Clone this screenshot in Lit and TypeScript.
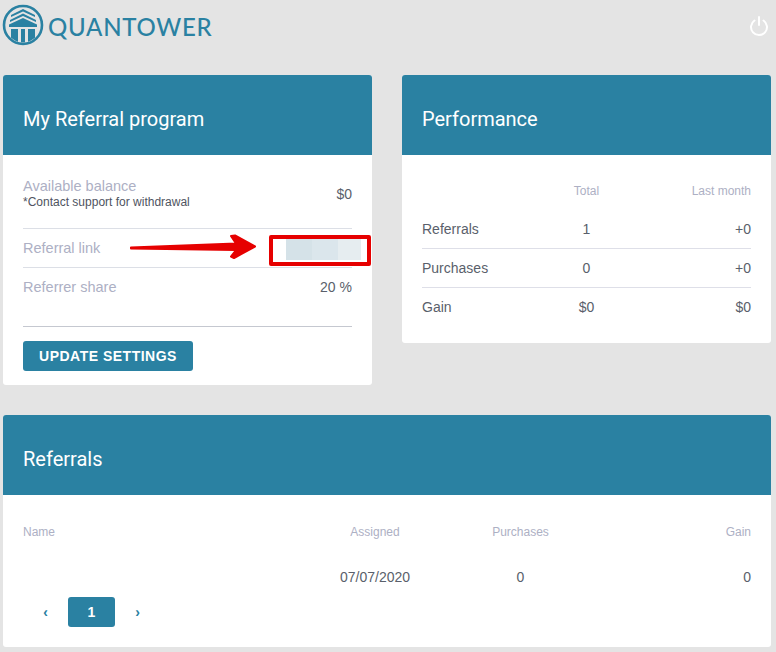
import { LitElement, html, css, svg } from "lit";
import { customElement } from "lit/decorators.js";

@customElement("app-root")
export class AppRoot extends LitElement {
  static styles = css`
    :host { display: block; width: 776px; height: 652px; background: #e4e4e4; font-family: "Liberation Sans", Arial, sans-serif; color: #5a5f6b; font-size: 14px; overflow: hidden; }
    .top { height: 75px; display: flex; justify-content: space-between; align-items: flex-start; padding-left: 2px; padding-right: 6px; box-sizing: border-box; }
    .brand { display: flex; align-items: center; gap: 4px; height: 50px; }
    .brand span { font-family: "Lato", "Liberation Sans", sans-serif; font-weight: 500; font-size: 24px; letter-spacing: 0.75px; color: #2a81a2; position: relative; top: 1px; }
    .power { margin-top: 15px; display: block; }
    .grid { display: grid; grid-template-columns: 369px 369px; column-gap: 30px; row-gap: 30px; padding-left: 3px; align-items: start; }
    .card { background: #fff; border-radius: 3px; overflow: hidden; position: relative; }
    .wide { grid-column: 1 / 3; height: 232px; }
    .head { background: #2a81a2; height: 80px; display: flex; align-items: center; padding: 7px 20px 0; box-sizing: border-box; color: #fff; font-family: "Roboto", sans-serif; font-size: 20px; }
    .left { height: 310px; }
    .body { padding: 0 20px; }
    .row { display: flex; justify-content: space-between; align-items: center; border-bottom: 1px solid #dcdfe6; font-size: 14px; }
    .row .k { color: #adb0c4; font-size: 14.5px; }
    .r1 { height: 74px; padding-top: 4px; box-sizing: border-box; }
    .r1 small { display: block; font-size: 12px; color: #4f5461; margin-top: 1px; }
    .r2 { height: 38px; }
    .r3 { height: 38px; border-bottom: none; }
    .rule { border-top: 1px solid #c5c8d0; margin-top: 20px; }
    button { display: block; margin-top: 14px; width: 170px; height: 30px; border: none; border-radius: 3px; background: #2a81a2; color: #fff; font: bold 14px "Liberation Sans", Arial, sans-serif; letter-spacing: 0.5px; padding: 0; }
    .blur { display: flex; width: 75px; height: 23px; }
    .blur i { display: block; height: 100%; }
    .b1 { width: 26px; background: #d5e2e8; } .b2 { width: 26px; background: #dbe6ec; } .b3 { width: 23px; background: #e6edf0; }
    .fieldrow { position: relative; }
    .fieldrow .blur { margin-right: -9px; }
    .redbox { position: absolute; left: 266px; top: 160px; width: 102px; height: 31px; box-sizing: border-box; border: 4px solid #e60000; border-radius: 2px; }
    .arrow { position: absolute; left: 125px; top: 155px; }
    .perf { display: grid; grid-template-columns: 1fr; height: 188px; padding: 18px 20px 0; box-sizing: border-box; }
    .pr { display: grid; grid-template-columns: 1fr 60px 1fr; align-items: center; height: 38px; border-bottom: 1px solid #dedfe8; }
    .pr.h { height: 37px; border: none; font-size: 12px; color: #adb0c4; padding-bottom: 1px; box-sizing: border-box; }
    .pr.last { border: none; }
    .pr > :nth-child(2) { text-align: center; }
    .pr > :nth-child(3) { text-align: right; }
    .ref { padding: 0 20px; }
    .rr { display: grid; grid-template-columns: 297px 110px 1fr 140px; align-items: center; }
    .rr > :nth-child(2) { text-align: center; }
    .rr > :nth-child(3) { text-align: center; }
    .rr > :nth-child(4) { text-align: right; }
    .rr.h { height: 74px; font-size: 12px; color: #adb0c4; }
    .rr.d { height: 0; margin-top: 0; }
    .rr.v { height: 0; position: relative; }
    .pager { display: flex; align-items: center; margin-top: 28px; padding-left: 0; font-weight: bold; color: #2a81a2; font-size: 14px; }
    .pager a { width: 45px; text-align: center; }
    .pager b { width: 47px; height: 30px; line-height: 30px; text-align: center; color: #fff; background: #2a81a2; border-radius: 3px; }
  `;

  private logo() {
    return html`<svg width="42" height="42" viewBox="0 0 42 42">
      <defs><clipPath id="c"><circle cx="21" cy="21" r="17.5"/></clipPath></defs>
      <circle cx="21" cy="21" r="19" fill="none" stroke="#2a81a2" stroke-width="2.6"/>
      <g clip-path="url(#c)" fill="#2a81a2">
        ${svg`<path d="M21 5 L33 11 L33 13 L21 7.5 L9 13 L9 11Z"/>
        <path d="M21 9.5 L34 16 L34 18 L21 12 L8 18 L8 16Z"/>
        <path d="M21 14 L35 20.5 L35 23 L7 23 L7 20.5Z"/>
        <rect x="9" y="25" width="7" height="16"/>
        <rect x="19" y="25" width="4" height="16"/>
        <rect x="26" y="25" width="7" height="16"/>`}
      </g>
    </svg>`;
  }

  render() {
    return html`
      <div class="top">
        <div class="brand">${this.logo()}<span>QUANTOWER</span></div>
        <svg class="power" width="22" height="22" viewBox="0 0 22 22" fill="none" stroke="#fff" stroke-width="2" stroke-linecap="round">
          <path d="M11 2 V10"/>
          <path d="M6.5 5.5 A8 8 0 1 0 15.5 5.5"/>
        </svg>
      </div>
      <div class="grid">
        <section class="card left">
          <div class="head">My Referral program</div>
          <div class="body">
            <div class="row r1"><div class="k">Available balance<small>*Contact support for withdrawal</small></div><div>$0</div></div>
            <div class="row r2 fieldrow"><div class="k">Referral link</div><div class="blur"><i class="b1"></i><i class="b2"></i><i class="b3"></i></div></div>
            <div class="row r3"><div class="k">Referrer share</div><div>20 %</div></div>
            <div class="rule"></div>
            <button>UPDATE SETTINGS</button>
          </div>
          <div class="redbox"></div>
          <svg class="arrow" width="134" height="34" viewBox="0 0 134 34">
            <path fill="#e60000" stroke="#e60000" stroke-width="2" stroke-linejoin="round" d="M3 17.5 L108 13.5 L103 6 L107 5.5 L127 16.5 L106 28 L103 26.5 L108 20 L3 18.5Z"/>
          </svg>
        </section>
        <section class="card">
          <div class="head">Performance</div>
          <div class="perf">
            <div>
              <div class="pr h"><div></div><div>Total</div><div>Last month</div></div>
              <div class="pr"><div>Referrals</div><div>1</div><div>+0</div></div>
              <div class="pr"><div>Purchases</div><div>0</div><div>+0</div></div>
              <div class="pr last"><div>Gain</div><div>$0</div><div>$0</div></div>
            </div>
          </div>
        </section>
        <section class="card wide">
          <div class="head">Referrals</div>
          <div class="ref">
            <div class="rr h"><div>Name</div><div>Assigned</div><div>Purchases</div><div>Gain</div></div>
            <div class="rr v"><div></div><div>07/07/2020</div><div>0</div><div>0</div></div>
            <div class="pager"><a>‹</a><b>1</b><a>›</a></div>
          </div>
        </section>
      </div>
    `;
  }
}
